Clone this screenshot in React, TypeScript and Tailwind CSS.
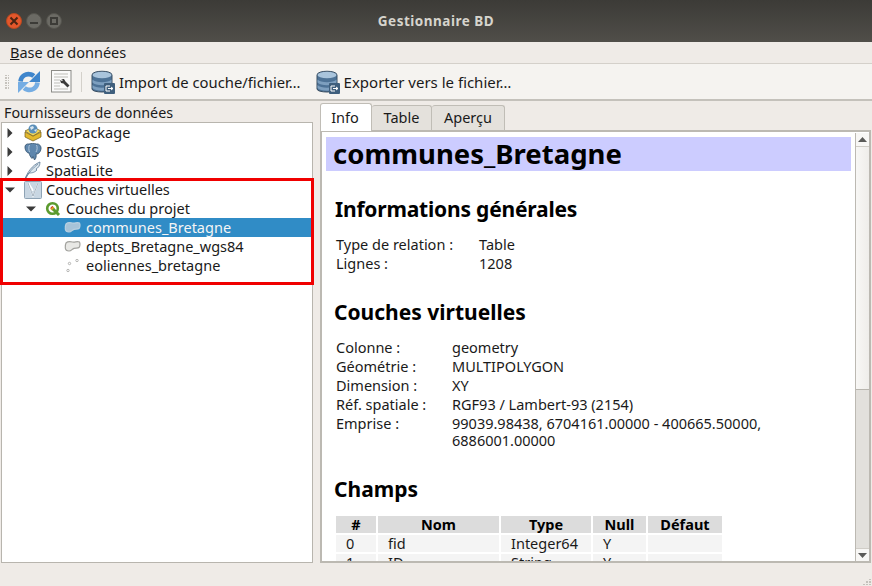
import React from "react";

const Tri = ({ open }: { open?: boolean }) => (
  <svg width="12" height="12" viewBox="0 0 12 12" className="shrink-0">
    {open ? <path d="M1 3.500h10L6 8.500z" fill="#3a3a3a" /> : <path d="M3.500 1v10L8.500 6z" fill="#3a3a3a" />}
  </svg>
);

const Db = () => (
  <svg width="24" height="24" viewBox="0 0 24 24" className="shrink-0">
    <path d="M1 5c0-5 20-5 20 0v14c0 4-20 4-20 0z" fill="#4d7296" stroke="#3b4f63" />
    <ellipse cx="11" cy="5" rx="9.500" ry="3.200" fill="#a9c4dc" />
    <path d="M1.500 9.500c3 3.500 16 3.500 19 0v3c-3 3.500-16 3.500-19 0z" fill="#7d9fbf" />
    <path d="M1.500 15c3 3.500 16 3.500 19 0v3c-3 3.500-16 3.500-19 0z" fill="#7d9fbf" />
    <rect x="13" y="13" width="11" height="11" rx="1" fill="#3f5f7d" />
    <path d="M15 16h4M15 21h4M15 16v5M17 18.500h5M20 17l2 1.500-2 1.500" stroke="#fff" strokeWidth="1" fill="none" />
  </svg>
);

const Refresh = () => (
  <svg width="24" height="24" viewBox="0 0 24 24" className="shrink-0">
    <path d="M3.500 11.500C4 6 9 3 14 4.500c1 .3 2 .8 2.800 1.500" stroke="#3f86cc" strokeWidth="4.600" fill="none" />
    <path d="M23 1v11H12z" fill="#3f86cc" />
    <path d="M20.500 12.500C20 18 15 21 10 19.500c-1-.3-2-.8-2.800-1.500" stroke="#75ade3" strokeWidth="4.600" fill="none" />
    <path d="M1 23V12h11z" fill="#75ade3" />
  </svg>
);

const DocTool = () => (
  <svg width="21" height="23" viewBox="0 0 21 23" className="shrink-0">
    <rect x=".5" y=".5" width="19.500" height="21.500" fill="#fafafa" stroke="#8c8c88" />
    <path d="M3 4h14M3 7h14M3 10h6M3 13h6M3 16h6M3 19h14" stroke="#bdbdb8" />
    <path d="M10 9l3 0 1.500 2.500 4 4-2 2-4-4L10 13l-1-3 2 1 1-1z" fill="#3c3c3c" />
  </svg>
);

const GeoPkg = () => (
  <svg width="18" height="18" viewBox="0 0 18 18" className="shrink-0">
    <path d="M1 8l8 4 8-4v5l-8 4-8-4z" fill="#e3b92e" stroke="#6e5a1a" strokeWidth=".7" />
    <path d="M1 7l8-4 8 4-8 5z" fill="#f5d95a" stroke="#6e5a1a" strokeWidth=".7" />
    <circle cx="9" cy="5" r="4.500" fill="#5b8fb9" />
    <path d="M6 3l3-1 1 2-3 2zM10 6l3-1-1 3z" fill="#d9e6ef" />
  </svg>
);

const Elephant = () => (
  <svg width="18" height="18" viewBox="0 0 18 18" className="shrink-0">
    <path d="M5 1C2.500.5.500 2 1 5s2 5 4 5c.5 2 1.500 4 3 5.500l1-2 1.500 3.500c1.500-1.500 2-3.500 1.500-6 2.500.3 4.500-2 5-5S15 .5 12.500 1C10 .2 7.500.2 5 1z" fill="#5f87ad" stroke="#34536f" strokeWidth=".8" />
    <path d="M5.500 2c-1 2-.8 5 0 7M12.500 2c1 2 .8 5-.5 7" stroke="#c4d6e5" strokeWidth=".8" fill="none" />
  </svg>
);

const Feather = () => (
  <svg width="18" height="19" viewBox="0 0 18 19" className="shrink-0">
    <path d="M1 18C3 12 8 4 16 1c0 4-2 6-4 7l1 1c-3 3-6 3-8 3-1 1-3 4-4 6z" fill="#dbe6ee" stroke="#5d7a94" strokeWidth=".8" />
    <path d="M2 17c3-6 7-10 12-14" stroke="#5d7a94" strokeWidth=".7" fill="none" />
  </svg>
);

const Virtual = () => (
  <svg width="18" height="18" viewBox="0 0 18 18" className="shrink-0">
    <rect x=".5" y=".5" width="17" height="17" rx="1" fill="#c8d6e2" stroke="#8ea3b5" />
    <path d="M4 2l5 13 5-13M5 2c1 4 3 4 4 8" stroke="#fff" strokeWidth="1.300" fill="none" />
    <path d="M4 2l5 13 5-13" stroke="#6f8599" strokeWidth=".6" fill="none" />
  </svg>
);

const QLogo = () => (
  <svg width="16" height="16" viewBox="0 0 16 16" className="shrink-0">
    <circle cx="7.500" cy="7.500" r="5.300" fill="none" stroke="#5b9a2e" strokeWidth="2.600" />
    <circle cx="7.500" cy="7.500" r="2" fill="#e3a32b" />
    <path d="M8 8l6 6" stroke="#5b9a2e" strokeWidth="3" />
    <path d="M6 7.500a2 2 0 0 1 2-2" stroke="#c33" fill="none" />
  </svg>
);

const Poly = ({ light }: { light?: boolean }) => (
  <svg width="18" height="14" viewBox="0 0 18 14" className="shrink-0">
    <path
      d="M2 3c1.500-1.500 4-1.500 6.500-1S13 1 15.500 2c.8 1.500.5 4.500-.5 5.500s-3 .3-5 .8-2.500 2.700-5 2.700-3.500-1-3.700-3S1.500 4 2 3z"
      fill={light ? "#a7c3d8" : "#e8e8e5"}
      stroke={light ? "#b9d0e0" : "#a2a29e"}
      strokeWidth="1.200"
    />
  </svg>
);

const Points = () => (
  <svg width="18" height="14" viewBox="0 0 18 14" className="shrink-0">
    <circle cx="13" cy="1.500" r="1.200" fill="#fff" stroke="#9a9a96" strokeWidth=".7" />
    <circle cx="5.500" cy="4.500" r="1.200" fill="#fff" stroke="#9a9a96" strokeWidth=".7" />
    <circle cx="4" cy="11.500" r="1.200" fill="#fff" stroke="#9a9a96" strokeWidth=".7" />
  </svg>
);

const Row = ({ indent, children, selected }: { indent: string; children: React.ReactNode; selected?: boolean }) => (
  <div className={`h-[19px] flex items-center leading-none whitespace-nowrap ${indent} ${selected ? "bg-[#308cc6] text-[#f5f5f5]" : ""}`}>
    {children}
  </div>
);

const WinBtn = ({ children, red }: { children: React.ReactNode; red?: boolean }) => (
  <div
    className={`w-[16px] h-[16px] rounded-full flex items-center justify-center ${
      red ? "bg-[#e2572c] border border-[#b8481f]" : "bg-[#6b6a64] border border-[#55544e]"
    }`}
  >
    {children}
  </div>
);

const H2 = ({ children, className }: { children: React.ReactNode; className: string }) => (
  <div className={`font-bold text-[21px] leading-[26px] text-black ml-[8px] ${className}`}>{children}</div>
);

const Kv = ({ k, v, w }: { k: string; v: React.ReactNode; w: string }) => (
  <div className="flex ml-[10px] leading-[19px]">
    <div className={`shrink-0 ${w}`}>{k}</div>
    <div className="w-[325px] leading-[17px] pt-px">{v}</div>
  </div>
);

const fields = [
  ["0", "fid", "Integer64", "Y", ""],
  ["1", "ID", "String", "Y", ""],
];

const cols = ["w-[40px]", "w-[121px]", "w-[90px]", "w-[53px]", "w-[74px]"];

export default function App() {
  return (
    <div className="w-[872px] h-[586px] overflow-hidden flex flex-col bg-[#efebe7] text-[#1a1a1a] text-[14.500px] font-['Noto_Sans',sans-serif]">
      <div className="h-[42px] shrink-0 relative flex items-center bg-gradient-to-b from-[#3c3b37] to-[#504e49]">
        <div className="flex items-center gap-[4px] pl-[6px]">
          <WinBtn red>
            <svg width="10" height="10" viewBox="0 0 10 10"><path d="M1.500 1.500l7 7M8.500 1.500l-7 7" stroke="#4a2412" strokeWidth="2" /></svg>
          </WinBtn>
          <WinBtn>
            <div className="w-[8px] h-[2px] bg-[#3c3b37] mt-[4px]" />
          </WinBtn>
          <WinBtn>
            <div className="w-[8px] h-[8px] border-2 border-[#3c3b37]" />
          </WinBtn>
        </div>
        <div className="absolute inset-0 flex items-center justify-center font-bold text-[#d6d4cd] text-[13.500px] tracking-[0.5px]">
          Gestionnaire BD
        </div>
      </div>

      <div className="h-[22px] shrink-0 flex items-center pl-[10px] border-b border-[#d4d0ca] bg-[#efebe7]">
        <span><span className="underline">B</span>ase de données</span>
      </div>

      <div className="h-[37px] shrink-0 flex items-center bg-[#f5f3f0] border-b-2 border-[#c4c1bb]">
        <div className="grid grid-cols-2 gap-[1px] ml-[5px] mr-[8px]">
          {Array.from({ length: 12 }).map((_, i) => (
            <div key={i} className="w-[1.500px] h-[1.500px] bg-[#c6c3bd]" />
          ))}
        </div>
        <Refresh />
        <div className="w-[10px]" />
        <DocTool />
        <div className="w-px h-[20px] bg-[#d4d1cb] ml-[9px] mr-[9px]" />
        <Db />
        <span className="ml-[4px] mr-[15px] whitespace-nowrap text-[14.800px] pt-[2px]">Import de couche/fichier…</span>
        <Db />
        <span className="ml-[4px] whitespace-nowrap text-[15px] pt-[2px]">Exporter vers le fichier…</span>
      </div>

      <div className="flex-1 min-h-0 flex">
        <div className="w-[320px] shrink-0 flex flex-col pl-[1px] pr-[7px]">
          <div className="h-[21px] shrink-0 flex items-end pl-[3px] leading-[19px] text-[14.300px]">Fournisseurs de données</div>
          <div className="relative flex-1 min-h-0 bg-white border border-[#b8b5ae] pr-[1px]">
            <Row indent="pl-[2px]"><Tri /><span className="w-[8px]" /><GeoPkg /><span className="ml-[4px]">GeoPackage</span></Row>
            <Row indent="pl-[2px]"><Tri /><span className="w-[8px]" /><Elephant /><span className="ml-[4px]">PostGIS</span></Row>
            <Row indent="pl-[2px]"><Tri /><span className="w-[8px]" /><Feather /><span className="ml-[4px]">SpatiaLite</span></Row>
            <Row indent="pl-[2px]"><Tri open /><span className="w-[8px]" /><Virtual /><span className="ml-[4px]">Couches virtuelles</span></Row>
            <Row indent="pl-[23px]"><Tri open /><span className="w-[8px]" /><QLogo /><span className="ml-[5px]">Couches du projet</span></Row>
            <Row indent="pl-[62px] gap-[4px]" selected><Poly light /><span>communes_Bretagne</span></Row>
            <Row indent="pl-[62px] gap-[4px]"><Poly /><span>depts_Bretagne_wgs84</span></Row>
            <Row indent="pl-[62px] gap-[4px]"><Points /><span>eoliennes_bretagne</span></Row>
            <div className="absolute left-[-2px] top-[55px] w-[314px] h-[107px] border-[3px] border-[#f00000]" />
          </div>
        </div>

        <div className="flex-1 min-w-0 flex flex-col pr-px">
          <div className="h-[29px] shrink-0 flex items-end relative z-10 pt-[2px]">
            <div className="w-[52px] h-[28px] bg-white border border-b-0 border-[#c0bdb6] rounded-t-[3px] flex items-center justify-center mb-[-1px] pr-[2px]">Info</div>
            <div className="w-[60px] h-[25px] bg-[#e4e1dc] border border-l-0 border-b-0 border-[#c0bdb6] rounded-t-[3px] flex items-center justify-center">Table</div>
            <div className="w-[73px] h-[25px] bg-[#e4e1dc] border border-l-0 border-b-0 border-[#c0bdb6] rounded-t-[3px] flex items-center justify-center">Aperçu</div>
          </div>
          <div className="flex-1 min-h-0 flex bg-white border-2 border-[#bcb9b2] pt-[1px] pl-px">
            <div className="flex-1 min-w-0 overflow-hidden pl-[3px] pt-[4px] pr-[4px]">
              <div className="h-[34px] bg-[#ccccff] flex items-center pl-[7px] font-bold text-[27.500px] leading-none text-black whitespace-nowrap">communes_Bretagne</div>
              <H2 className="mt-[25px] pl-px tracking-[-0.2px]">Informations générales</H2>
              <div className="mt-[13px]">
                <Kv k="Type de relation :" w="w-[143px]" v="Table" />
                <Kv k="Lignes :" w="w-[143px]" v="1208" />
              </div>
              <H2 className="mt-[26px]">Couches virtuelles</H2>
              <div className="mt-[13px]">
                <Kv k="Colonne :" w="w-[116px]" v="geometry" />
                <Kv k="Géométrie :" w="w-[116px]" v="MULTIPOLYGON" />
                <Kv k="Dimension :" w="w-[116px]" v="XY" />
                <Kv k="Réf. spatiale :" w="w-[116px]" v="RGF93 / Lambert-93 (2154)" />
                <Kv k="Emprise :" w="w-[116px]" v={<>99039.98438, 6704161.00000 - 400665.50000,<br />6886001.00000</>} />
              </div>
              <H2 className="mt-[27px]">Champs</H2>
              <div className="mt-[14px] ml-[10px] flex flex-col gap-[2px]">
                <div className="flex gap-[2px]">
                  {["#", "Nom", "Type", "Null", "Défaut"].map((h, i) => (
                    <div key={h} className={`${cols[i]} h-[17px] bg-[#dcdcdc] font-bold text-center leading-[16px] text-black`}>{h}</div>
                  ))}
                </div>
                {fields.map((r) => (
                  <div key={r[0]} className="flex gap-[2px]">
                    {r.map((c, i) => (
                      <div key={i} className={`${cols[i]} h-[17px] bg-[#f4f4f4] leading-[17px] pl-[10px]`}>{c}</div>
                    ))}
                  </div>
                ))}
              </div>
            </div>
            <div className="w-[14px] shrink-0 flex flex-col border-l border-[#bcb9b2] bg-gradient-to-r from-[#f8f7f5] to-[#efedea]">
              <div className="h-[14px] shrink-0 flex items-center justify-center border-b border-[#d0cdc7] bg-[#f8f7f5]">
                <svg width="9" height="5" viewBox="0 0 9 5"><path d="M0 5h9L4.500 0z" fill="#5a5a58" /></svg>
              </div>
              <div className="h-[242px] shrink-0" />
              <div className="flex-1 border-t border-[#b8b5ae] bg-[#e2e0dc]" />
              <div className="h-[13px] shrink-0 flex items-center justify-center border-t border-[#d0cdc7] bg-[#f8f7f5]">
                <svg width="9" height="5" viewBox="0 0 9 5"><path d="M0 0h9L4.500 5z" fill="#5a5a58" /></svg>
              </div>
            </div>
          </div>
        </div>
      </div>

      <div className="h-[23px] shrink-0 relative bg-[#efebe7]">
        <div className="absolute right-[1px] bottom-[1px] grid grid-cols-3 gap-[1px] w-[8px]">
          {[0, 0, 1, 0, 1, 1, 1, 1, 1].map((v, i) => (
            <div key={i} className={`w-[1.500px] h-[1.500px] ${v ? "bg-[#c4c1bb]" : ""}`} />
          ))}
        </div>
      </div>
    </div>
  );
}
